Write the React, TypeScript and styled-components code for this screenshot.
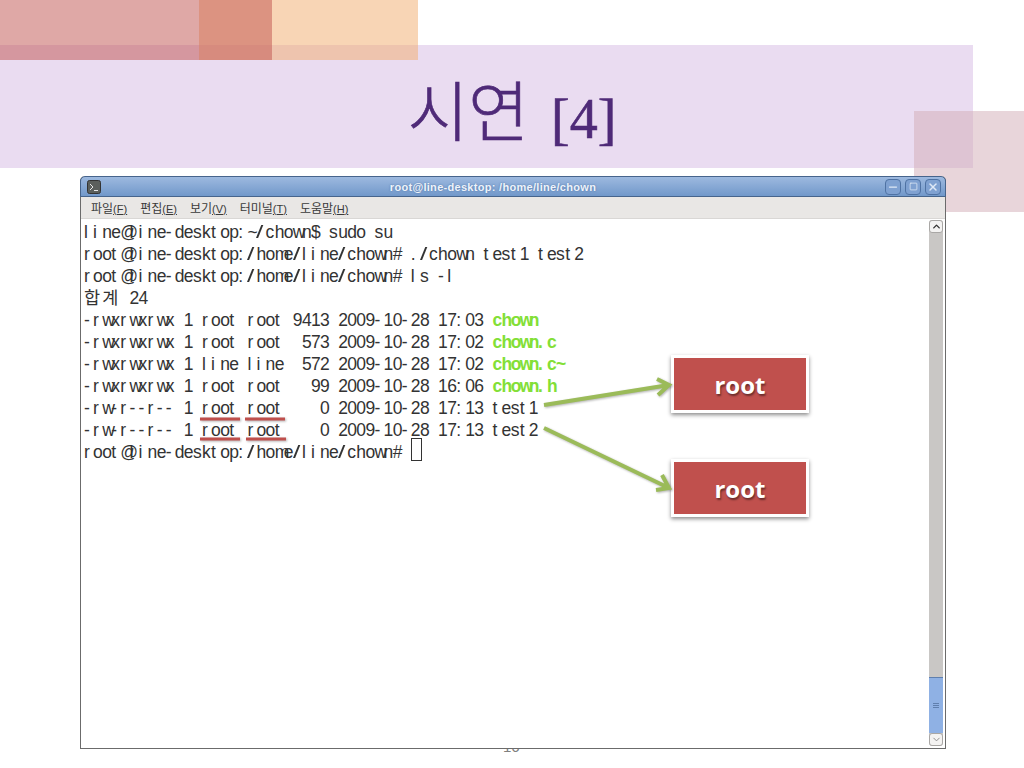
import styled, { createGlobalStyle } from "styled-components";
import { ChevronDown, ChevronUp, Minus, Square, X } from "lucide-react";

const GlobalStyle = createGlobalStyle`
  html, body {
    margin: 0;
    padding: 0;
    background: #fff;
    overflow: hidden;
  }
`;

const Slide = styled.main`
  position: relative;
  width: 1024px;
  height: 768px;
  overflow: hidden;
  background: #fff;
  padding-top: 45px;
  box-sizing: border-box;
`;

const Banner = styled.header`
  width: 973px;
  height: 123px;
  background: #eadcf1;
  display: flex;
  align-items: center;
  justify-content: center;
  color: #4f2a78;
  padding-left: 51px;
  box-sizing: border-box;
`;

const Title = styled.h1`
  margin: 0;
  display: flex;
  align-items: center;
  gap: 22px;
  font-weight: 400;
  line-height: 1;
`;

const TitleHangul = styled.span`
  font-family: "Noto Sans CJK KR", sans-serif;
  font-size: 66px;
  font-weight: 300;
  -webkit-text-stroke: 0.7px #4f2a78;
`;

const TitleIndex = styled.span`
  font-family: "Liberation Serif", serif;
  font-size: 56px;
  margin-top: 24px;
  -webkit-text-stroke: 0.6px #4f2a78;
`;

const Decor = styled.div<{ $left: number; $top: number; $w: number; $h: number; $bg: string }>`
  position: absolute;
  left: ${(p) => p.$left}px;
  top: ${(p) => p.$top}px;
  width: ${(p) => p.$w}px;
  height: ${(p) => p.$h}px;
  background: ${(p) => p.$bg};
`;

const PageNumber = styled.div`
  position: absolute;
  left: 503px;
  top: 738px;
  font-family: "Liberation Sans", sans-serif;
  font-size: 15px;
  color: #808080;
`;

const TerminalWindow = styled.section`
  position: relative;
  z-index: 1;
  margin: 8px 0 0 80px;
  width: 866px;
  height: 573px;
  box-sizing: border-box;
  display: flex;
  flex-direction: column;
  background: #fff;
  border: 1px solid #6b6b6b;
  border-top: 0;
  border-radius: 5px 5px 0 0;
`;

const TitleBar = styled.div`
  position: relative;
  height: 21px;
  margin: 0 -1px;
  flex: none;
  display: flex;
  align-items: center;
  justify-content: space-between;
  padding: 0 4px 0 6px;
  box-sizing: border-box;
  background: linear-gradient(#9db9df, #7198ca);
  border: 1px solid #46648c;
  border-radius: 5px 5px 0 0;
`;

const TitleText = styled.div`
  position: absolute;
  left: 0;
  right: 40px;
  text-align: center;
  font-family: "Liberation Sans", sans-serif;
  font-size: 11px;
  letter-spacing: 0.3px;
  font-weight: 700;
  color: #eef3fa;
  text-shadow: 0 0 2px #4d72a6;
`;

const WindowButtons = styled.div`
  display: flex;
  gap: 4px;
`;

const WindowButton = styled.div`
  width: 16px;
  height: 16px;
  box-sizing: border-box;
  display: flex;
  align-items: center;
  justify-content: center;
  color: #dfe9f6;
  background: #7fa1d1;
  border: 1px solid #4f72a3;
  border-radius: 4px;
`;

const MenuBar = styled.nav`
  height: 22px;
  flex: none;
  display: flex;
  align-items: center;
  gap: 13px;
  padding-left: 10px;
  background: #e9e7e5;
  border-bottom: 1px solid #d9d7d5;
  box-sizing: border-box;
  font-family: "Noto Sans CJK KR", sans-serif;
  font-size: 12px;
  color: #3a3a3a;
`;

const MenuKey = styled.span`
  font-family: "Liberation Sans", sans-serif;
  font-size: 11px;
  text-decoration: underline;
`;

const Body = styled.div`
  flex: 1;
  min-height: 0;
  display: flex;
`;

const Screen = styled.div`
  flex: 1;
  padding: 2px 0 0 3px;
  font-family: "Liberation Sans", "Noto Sans CJK KR", sans-serif;
  font-size: 17.5px;
  color: #333;
`;

const Row = styled.div`
  display: flex;
  height: 22px;
  line-height: 22px;
  white-space: pre;
`;

const Cell = styled.span<{ $wide?: boolean; $exec?: boolean; $slash?: boolean }>`
  flex: none;
  width: ${(p) => (p.$wide ? 18.18 : 9.09)}px;
  font-weight: ${(p) => (p.$exec ? 700 : 400)};
  color: ${(p) => (p.$exec ? "#83df37" : "inherit")};
  transform-origin: left center;
  transform: ${(p) => (p.$slash ? "scaleX(1.5)" : "none")};
`;

const Cursor = styled.span`
  flex: none;
  width: 11px;
  height: 23px;
  box-sizing: border-box;
  border: 1px solid #333;
  margin-top: -3px;
`;

const Scrollbar = styled.div`
  flex: none;
  width: 14px;
  margin: 1px 2px 2px 0;
  display: flex;
  flex-direction: column;
  background: #c9c7c5;
  border-radius: 3px;
`;

const ScrollButton = styled.div`
  height: 13px;
  flex: none;
  display: flex;
  align-items: center;
  justify-content: center;
  background: #f4f3f2;
  border: 1px solid #a9a7a5;
  border-radius: 3px;
  box-sizing: border-box;
  color: #333;
`;

const ScrollTrack = styled.div`
  flex: 1;
`;

const ScrollThumb = styled.div`
  height: 56px;
  flex: none;
  display: flex;
  flex-direction: column;
  align-items: center;
  justify-content: center;
  gap: 1px;
  background: #8fb1e4;
  border-top: 1px solid #5f7fae;
  box-sizing: border-box;
`;

const Grip = styled.i`
  display: block;
  width: 6px;
  height: 1px;
  background: #5f7fae;
`;

const Callout = styled.div<{ $top: number }>`
  position: absolute;
  z-index: 2;
  left: 671px;
  top: ${(p) => p.$top}px;
  width: 138px;
  height: 58px;
  box-sizing: border-box;
  display: flex;
  align-items: center;
  justify-content: center;
  background: #c0504d;
  border: 3px solid #fff;
  box-shadow: 0 2px 4px rgba(0, 0, 0, 0.45);
  font-family: "Open Sans", sans-serif;
  font-size: 24px;
  font-weight: 700;
  color: #fff;
  text-shadow: 1px 2px 2px rgba(0, 0, 0, 0.45);
`;

const Annotations = styled.svg`
  position: absolute;
  z-index: 2;
  left: 0;
  top: 0;
  pointer-events: none;
  filter: drop-shadow(1px 1px 1px rgba(0, 0, 0, 0.3));
`;

const lines = [
  "line@line-desktop:~/chown$ sudo su",
  "root@line-desktop:/home/line/chown# ./chown test1 test2",
  "root@line-desktop:/home/line/chown# ls -l",
  "합계 24",
  "-rwxrwxrwx 1 root root 9413 2009-10-28 17:03 |chown",
  "-rwxrwxrwx 1 root root  573 2009-10-28 17:02 |chown.c",
  "-rwxrwxrwx 1 line line  572 2009-10-28 17:02 |chown.c~",
  "-rwxrwxrwx 1 root root   99 2009-10-28 16:06 |chown.h",
  "-rw-r--r-- 1 root root    0 2009-10-28 17:13 test1",
  "-rw-r--r-- 1 root root    0 2009-10-28 17:13 test2",
  "root@line-desktop:/home/line/chown# ",
];

const menus = [
  ["파일", "F"],
  ["편집", "E"],
  ["보기", "V"],
  ["터미널", "T"],
  ["도움말", "H"],
];

function TerminalLine({ text, cursor }: { text: string; cursor?: boolean }) {
  const [plain, exec] = text.includes("|") ? text.split("|") : [text, ""];
  return (
    <Row>
      {Array.from(plain).map((ch, i) => (
        <Cell key={i} $wide={/[가-힣]/.test(ch)} $slash={ch === "/"}>
          {ch}
        </Cell>
      ))}
      {Array.from(exec).map((ch, i) => (
        <Cell key={`x${i}`} $exec>
          {ch}
        </Cell>
      ))}
      {cursor && <Cursor />}
    </Row>
  );
}

function App() {
  return (
    <Slide>
      <GlobalStyle />
      <Banner>
        <Title>
          <TitleHangul>시연</TitleHangul>
          <TitleIndex>[4]</TitleIndex>
        </Title>
      </Banner>

      <Decor $left={199} $top={0} $w={219} $h={60} $bg="rgba(241, 171, 107, 0.5)" />
      <Decor $left={0} $top={0} $w={272} $h={60} $bg="rgba(192, 81, 77, 0.5)" />
      <Decor $left={914} $top={111} $w={110} $h={101} $bg="rgba(209, 171, 181, 0.5)" />
      <PageNumber>16</PageNumber>

      <TerminalWindow>
        <TitleBar>
          <svg width="14" height="14" viewBox="0 0 14 14">
            <rect x="0.5" y="0.5" width="13" height="13" rx="2" fill="#5b5f5c" stroke="#333" />
            <path d="M3 4l3 3-3 3M7 10.5h4" fill="none" stroke="#e6e6e6" strokeWidth="1" />
          </svg>
          <TitleText>root@line-desktop: /home/line/chown</TitleText>
          <WindowButtons>
            <WindowButton>
              <Minus size={12} strokeWidth={2.5} />
            </WindowButton>
            <WindowButton>
              <Square size={9} strokeWidth={2} />
            </WindowButton>
            <WindowButton>
              <X size={12} strokeWidth={3} />
            </WindowButton>
          </WindowButtons>
        </TitleBar>

        <MenuBar>
          {menus.map(([label, key]) => (
            <span key={key}>
              {label}
              <MenuKey>({key})</MenuKey>
            </span>
          ))}
        </MenuBar>

        <Body>
          <Screen>
            {lines.map((line, i) => (
              <TerminalLine key={i} text={line} cursor={i === lines.length - 1} />
            ))}
          </Screen>
          <Scrollbar>
            <ScrollButton>
              <ChevronUp size={11} strokeWidth={3} />
            </ScrollButton>
            <ScrollTrack />
            <ScrollThumb>
              <Grip />
              <Grip />
              <Grip />
            </ScrollThumb>
            <ScrollButton>
              <ChevronDown size={11} strokeWidth={2} color="#888" />
            </ScrollButton>
          </Scrollbar>
        </Body>
      </TerminalWindow>

      <Callout $top={355}>root</Callout>
      <Callout $top={459}>root</Callout>

      <Annotations width="1024" height="768" viewBox="0 0 1024 768">
        <g stroke="#bf4f4c" strokeWidth="3" fill="none">
          <path d="M200 419H240M245 419H285M200 439H240M246 439H286" />
        </g>
        <g stroke="#9bbb59" strokeWidth="4" fill="none">
          <path d="M544 405L669 385M657 379L669 385L658 395" />
          <path d="M544 428L669 488M662 475L669 488L656 490" />
        </g>
      </Annotations>
    </Slide>
  );
}

export default App;
